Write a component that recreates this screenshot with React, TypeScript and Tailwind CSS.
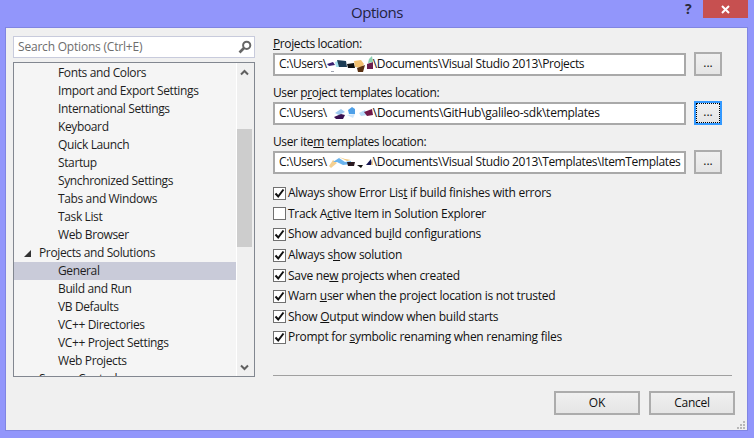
import React from "react";

const font = { fontFamily: '"Open Sans","Noto Sans",sans-serif' };

const rows: [string, number, boolean?][] = [
  ["Fonts and Colors", 1],
  ["Import and Export Settings", 1],
  ["International Settings", 1],
  ["Keyboard", 1],
  ["Quick Launch", 1],
  ["Startup", 1],
  ["Synchronized Settings", 1],
  ["Tabs and Windows", 1],
  ["Task List", 1],
  ["Web Browser", 1],
  ["Projects and Solutions", 0],
  ["General", 1, true],
  ["Build and Run", 1],
  ["VB Defaults", 1],
  ["VC++ Directories", 1],
  ["VC++ Project Settings", 1],
  ["Web Projects", 1],
  ["Source Control", 2],
];

type Poly = [string, string];

const blot1: Poly[] = [
  ["#3a2070", "2,9 8,7 10,10 4,11"],
  ["#a0a4b0", "6,16 9,16 9,17 6,17"],
  ["#a8e4f0", "10,7 13,6 14,12 11,12"],
  ["#1c3c55", "12,5 21,6 22,12 14,12"],
  ["#111111", "22,9 29,8 30,13 23,13"],
  ["#f2c070", "29,6 36,5 39,9 36,13 30,12"],
  ["#5a3010", "32,13 40,10 38,17 33,17"],
  ["#6a2050", "42,9 48,7 48,14 42,14"],
  ["#8ad0b0", "44,4 47,1 48,7 43,8"],
];
const blot2: Poly[] = [
  ["#9cc8ee", "10,9 16,5 20,8 14,11"],
  ["#3a1050", "9,13 16,10 20,11 18,15 11,15"],
  ["#4ea0e8", "23,6 27,3 30,5 30,10 24,10"],
  ["#cfe6fa", "22,11 30,10 28,14"],
  ["#b8dcf8", "34,9 40,6 42,11 36,12"],
  ["#701848", "39,8 47,5 48,11 42,12"],
];
const blot3: Poly[] = [
  ["#f5d090", "4,13 8,7 12,10 6,15"],
  ["#6ab4ee", "8,9 14,5 20,9 26,8 26,11 18,12 12,9"],
  ["#f2c878", "14,4 20,6 26,7 22,8"],
  ["#2a1a20", "22,9 30,9 29,13 23,13"],
  ["#111111", "32,12 38,12 36,15"],
  ["#141450", "41,12 46,6 47,12"],
  ["#f2d090", "46,12 48,5 48,12"],
];

function Scribble({ polys }: { polys: Poly[] }) {
  return (
    <svg width="46" height="18" viewBox="2 0 46 18" className="shrink-0">
      {polys.map(([fill, points], i) => (
        <polygon key={i} fill={fill} points={points} />
      ))}
    </svg>
  );
}

function Path({ polys, post, postClass }: { polys: Poly[]; post: string; postClass: string }) {
  return (
    <div className="flex h-[23px] flex-1 items-center overflow-hidden border-2 border-[#a9a9a9] bg-white pl-[4px] text-[12px] tracking-[-0.4px] whitespace-nowrap text-[#111]">
      <span>{"C:\\Users\\"}</span>
      <Scribble polys={polys} />
      <span className={postClass}>{post}</span>
    </div>
  );
}

function Browse({ focused }: { focused?: boolean }) {
  return (
    <button
      className={`ml-2 flex h-[24px] w-[28px] shrink-0 items-center justify-center border-2 bg-gradient-to-b from-[#f0f0f0] to-[#e5e5e5] text-[12px] leading-none text-[#111] ${focused ? "border-[#3399ff]" : "border-[#acacac]"}`}
    >
      <span className={`flex h-full w-full items-center justify-center pb-[2px] ${focused ? "border border-dotted border-black" : ""}`}>...</span>
    </button>
  );
}

function Field({ label, field, focused, className }: { label: React.ReactNode; field: React.ReactNode; focused?: boolean; className: string }) {
  return (
    <div className={className}>
      <div className="h-[17px] text-[12px] leading-[17px] tracking-[-0.38px] text-[#111]">{label}</div>
      <div className="flex items-center">
        {field}
        <Browse focused={focused} />
      </div>
    </div>
  );
}

function Check({ children, on = true }: { children: React.ReactNode; on?: boolean }) {
  return (
    <div className="flex h-[20.6px] items-center text-[12px] tracking-[-0.27px] whitespace-nowrap text-[#111]">
      <span className="mr-[2px] flex h-[13px] w-[13px] shrink-0 items-center justify-center border border-[#707070] bg-white">
        {on && (
          <svg width="11" height="11" viewBox="0 0 11 11">
            <path d="M1.5 5.5 L4.2 8.5 L9.5 1.5" fill="none" stroke="#111" strokeWidth="2" />
          </svg>
        )}
      </span>
      <span>{children}</span>
    </div>
  );
}

export default function App() {
  return (
    <div style={font} className="flex h-[438px] w-[754px] flex-col overflow-hidden bg-[#9296fb]">
      <div className="relative flex h-[27px] shrink-0 items-center justify-center pb-[2px] text-[15px] tracking-[-0.5px] text-[#23233f]">
        Options
        <span className="absolute top-[-2px] left-[685px] text-[14px] font-bold text-[#2a2a3a]">?</span>
        <span className="absolute top-0 left-[703px] flex h-[18px] w-[45px] items-center justify-center bg-[#c75050]">
          <svg width="9" height="9" viewBox="0 0 9 9">
            <path d="M1 1 L8 8 M8 1 L1 8" stroke="#fff" strokeWidth="2" />
          </svg>
        </span>
      </div>
      <div className="relative mr-[6px] mb-[7px] ml-[5px] flex min-h-0 flex-1 border border-[#8085e2] bg-[#f0f0f0]">
        <div className="ml-[7px] flex w-[242px] shrink-0 flex-col pt-[8px]">
          <div className="flex h-[22px] shrink-0 items-center justify-between border border-[#c8cbdc] bg-white pr-[2px] pl-[4px] text-[12px] tracking-[-0.2px] text-[#6d6d6d]">
            <span>Search Options (Ctrl+E)</span>
            <svg width="14" height="14" viewBox="0 0 14 14">
              <circle cx="8.7" cy="5.3" r="3.6" fill="none" stroke="#666" strokeWidth="2" />
              <path d="M6 8 L1.5 12.5" stroke="#666" strokeWidth="2.6" />
            </svg>
          </div>
          <div className="mt-[4px] flex h-[315px] shrink-0 border border-[#828790] bg-[#f5f5f5]">
            <div className="min-w-0 flex-1 overflow-hidden pt-[1px]">
              {rows.map(([t, kind, sel]) => (
                <div key={t} className={`flex h-[18px] items-center text-[12px] tracking-[-0.37px] whitespace-nowrap text-[#1e1e1e] ${sel ? "bg-[#c9cbd9]" : ""} ${kind === 1 ? "pl-[44px]" : kind === 2 ? "pl-[25px]" : "pl-[10px]"}`}>
                  {kind === 0 && (
                    <svg width="7" height="7" viewBox="0 0 7 7" className="mr-[8px] shrink-0">
                      <polygon points="0,7 7,0 7,7" fill="#333" />
                    </svg>
                  )}
                  {t}
                </div>
              ))}
            </div>
            <div className="flex w-[18px] shrink-0 flex-col border-l border-white bg-[#f0f0f0] pr-[2px]">
              <div className="flex h-[18px] shrink-0 items-center justify-center">
                <svg width="9" height="7" viewBox="0 0 9 7"><path d="M1 5.5 L4.5 2 L8 5.5" fill="none" stroke="#606060" strokeWidth="2" /></svg>
              </div>
              <div className="mt-[48px] h-[118px] shrink-0 bg-[#cdcdcd]" />
              <div className="flex-1" />
              <div className="flex h-[18px] shrink-0 items-center justify-center">
                <svg width="9" height="7" viewBox="0 0 9 7"><path d="M1 1.5 L4.5 5 L8 1.5" fill="none" stroke="#606060" strokeWidth="2" /></svg>
              </div>
            </div>
          </div>
        </div>
        <div className="ml-[18px] flex min-w-0 flex-1 flex-col">
          <div className="w-[449px]">
            <Field className="mt-[7px]" label={<><u>P</u>rojects location:</>} field={<Path polys={blot1} postClass="tracking-[-0.35px]" post="\Documents\Visual Studio 2013\Projects" />} />
            <Field className="mt-[8px]" focused label={<>User p<u>r</u>oject templates location:</>} field={<Path polys={blot2} postClass="tracking-[-0.25px]" post="\Documents\GitHub\galileo-sdk\templates" />} />
            <Field className="mt-[8px]" label={<>User ite<u>m</u> templates location:</>} field={<Path polys={blot3} postClass="tracking-[-0.35px]" post="\Documents\Visual Studio 2013\Templates\ItemTemplates" />} />
          </div>
          <div className="mt-[9px] flex flex-col">
            <Check>Always show Error Lis<u>t</u> if build finishes with errors</Check>
            <Check on={false}>Track A<u>c</u>tive Item in Solution Explorer</Check>
            <Check>Show advanced bu<u>i</u>ld configurations</Check>
            <Check>Always s<u>h</u>ow solution</Check>
            <Check>Save ne<u>w</u> projects when created</Check>
            <Check>Warn <u>u</u>ser when the project location is not trusted</Check>
            <Check>Show <u>O</u>utput window when build starts</Check>
            <Check>Prompt for <u>s</u>ymbolic renaming when renaming files</Check>
          </div>
          <div className="mt-[27px] h-[1px] w-[459px] bg-[#a0a0a0]" />
          <div className="mt-[15px] flex w-[462px] justify-end gap-[9px]">
            <button className="h-[24px] w-[86px] border-2 border-[#acacac] bg-gradient-to-b from-[#f0f0f0] to-[#e5e5e5] text-[12px] text-[#111]">OK</button>
            <button className="h-[24px] w-[86px] border-2 border-[#acacac] bg-gradient-to-b from-[#f0f0f0] to-[#e5e5e5] text-[12px] tracking-[-0.3px] text-[#111]">Cancel</button>
          </div>
        </div>
        <svg width="8" height="8" viewBox="0 0 8 8" className="absolute right-[2px] bottom-[1px]">
          <path d="M6 0h2v2h-2z M3 3h2v2h-2z M6 3h2v2h-2z M0 6h2v2h-2z M3 6h2v2h-2z M6 6h2v2h-2z" fill="#b8b8b8" />
        </svg>
      </div>
    </div>
  );
}
